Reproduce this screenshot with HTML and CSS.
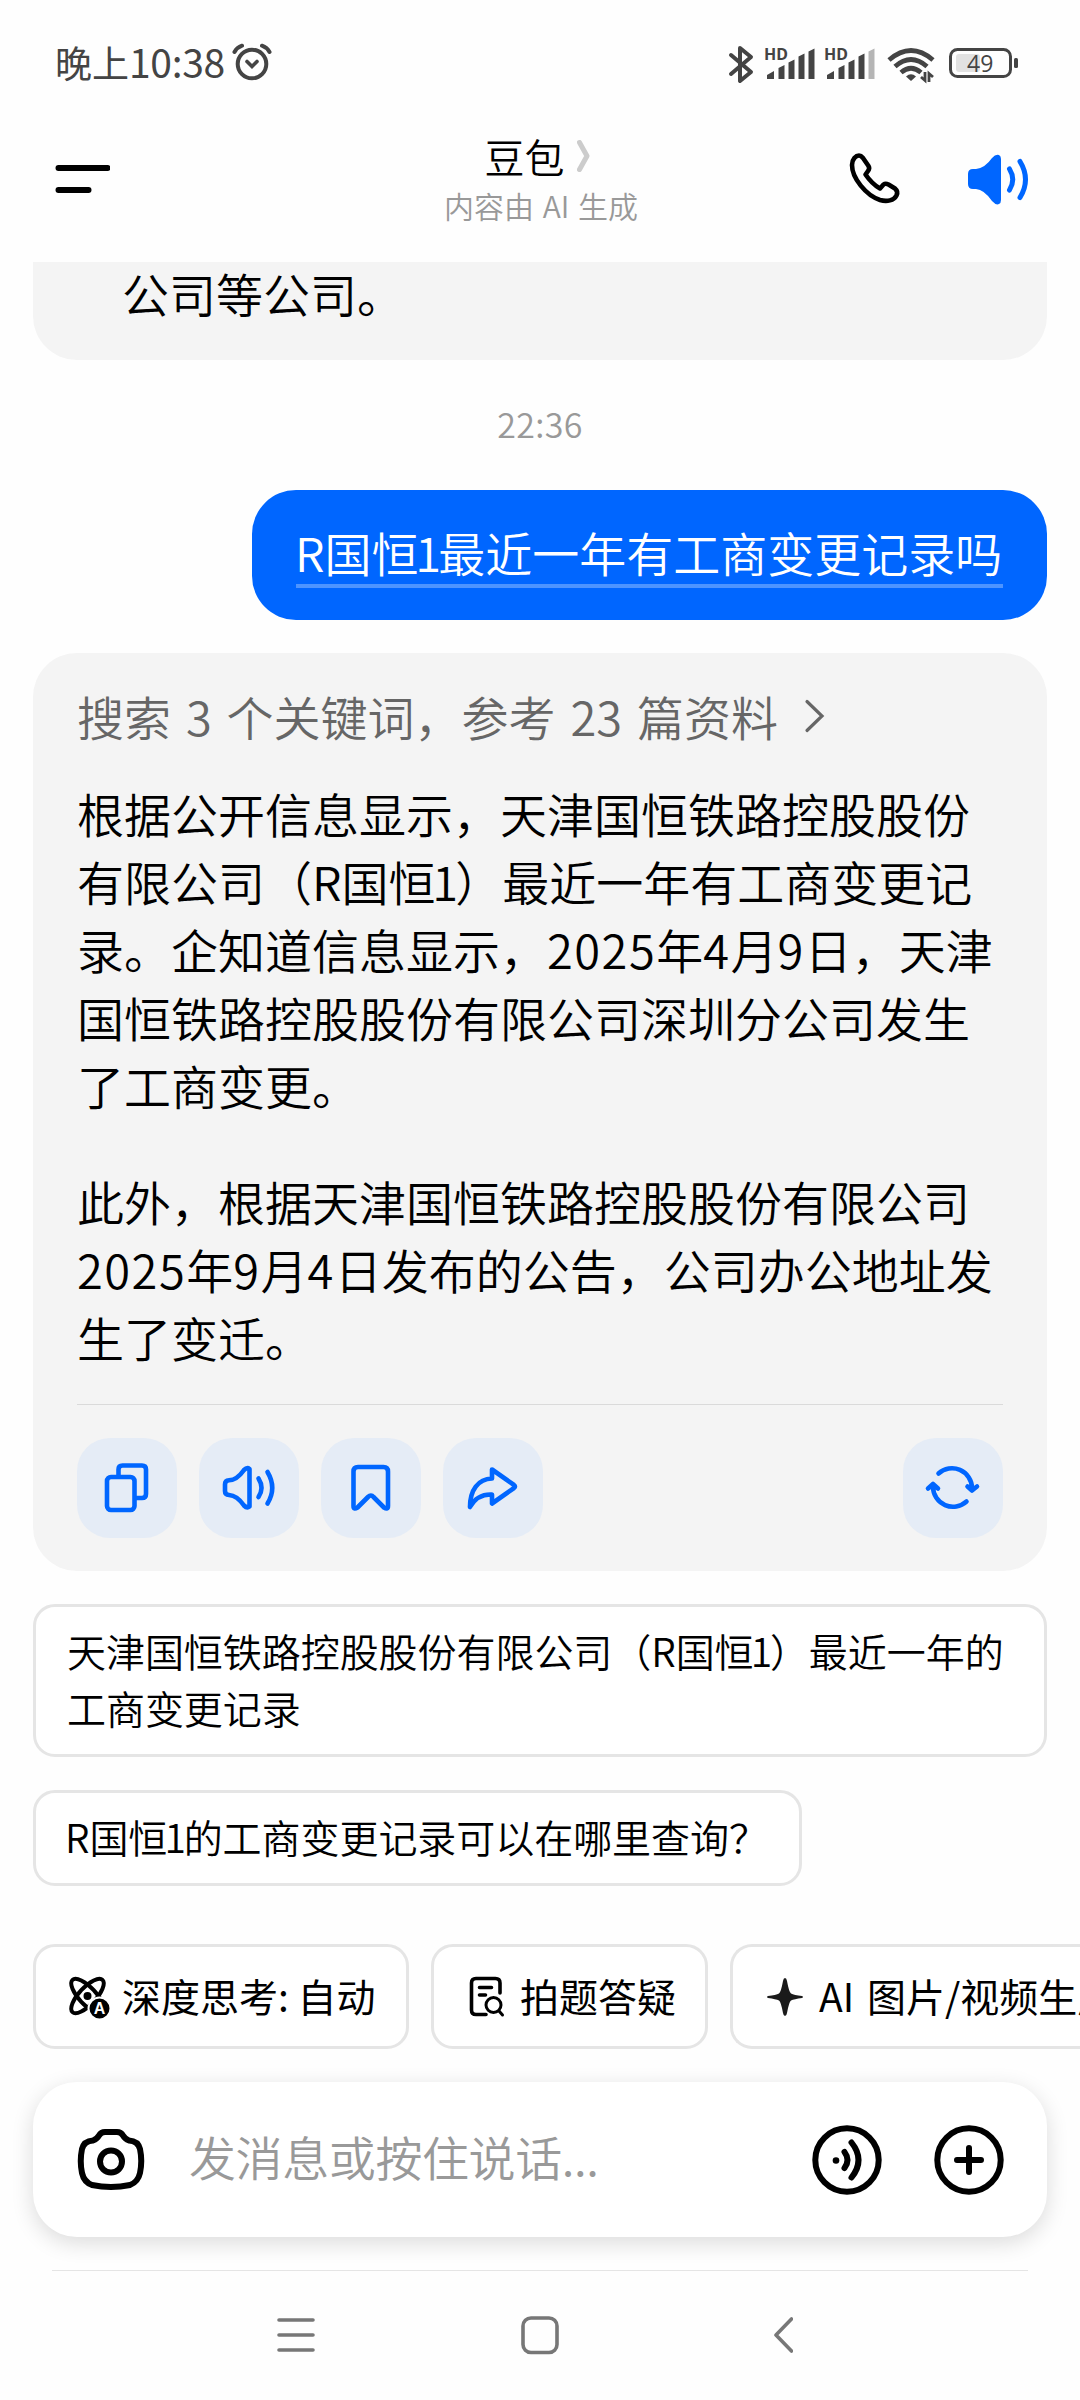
FILE: index.html
```html
<!DOCTYPE html>
<html lang="zh-CN">
  <head>
    <meta charset="UTF-8" />
    <title>豆包</title>
    <link rel="stylesheet" href="styles.css">
  </head>
  <body>
    <!-- Status bar -->
    <div class="status-bar">
      <span class="clock">晚上<span class="clock-num">10:38</span></span>
      <svg class="alarm" width="40" height="38" viewBox="0 0 40 38" fill="none" stroke="#444" stroke-linecap="round">
        <circle cx="20" cy="21" r="14.3" stroke-width="4" />
        <path d="M15 18.500l5 5 5-5" stroke-width="3.600" />
        <path d="M2.500 9Q5 4.500 10 2.700M37.500 9Q35 4.500 30 2.700" stroke-width="4" />
      </svg>
      <svg class="status-icons" width="300" height="50" viewBox="720 40 300 50" fill="#444">
        <path d="M731 55l20 17-11 9V48l11 9-20 17" fill="none" stroke="#444" stroke-width="4" stroke-linejoin="round" stroke-linecap="round" />
        <text x="764" y="59.500" class="hd">HD</text>
        <path d="M767 79v-4l7-4v8zM778.500 79V68l6-3v14zM788.500 79V62.500l6-3V79zM798.500 79V56.500l6-3V79zM808.500 79V51.500l6-3V79z" />
        <text x="824" y="59.500" class="hd">HD</text>
        <path d="M827 79v-4l7-4v8zM838.500 79V68l6-3v14zM848.500 79V62.500l6-3V79zM858.500 79V56.500l6-3V79z" />
        <path d="M868.500 79V51.500l6-3V79z" fill="#b5b5b5" />
        <g fill="none" stroke="#444" stroke-width="4.800">
          <path d="M889 60Q911 41 933 60" />
          <path d="M895 66.500Q911 52.500 927 66.500" />
          <path d="M901 72.500Q911 64 921 72.500" />
        </g>
        <path d="M906 76.500q5-4.500 10 0l-5 4.500z" />
        <path d="M925 72v8.500l-4-3.500M929 82v-8.500l4 3.500" fill="none" stroke="#444" stroke-width="2.800" />
        <rect x="950.500" y="49.500" width="60" height="27" rx="7" fill="none" stroke="#444" stroke-width="3" />
        <rect x="956" y="54" width="24" height="18" rx="3" fill="#e2e2e2" />
        <rect x="1014" y="58" width="4" height="10" rx="1.500" />
        <text x="967" y="71.500" class="battery">49</text>
      </svg>
    </div>

    <!-- Header -->
    <div class="header">
      <svg class="menu" width="56" height="30" viewBox="0 0 56 30" stroke="#000" stroke-width="6" stroke-linecap="round">
        <path d="M4.500 4h49M4.500 26h30" />
      </svg>
      <div class="title-box">
        <div class="title">豆包
          <svg width="13" height="32" viewBox="0 0 13 32" fill="none" stroke="#ccc" stroke-width="5" stroke-linecap="round" stroke-linejoin="round">
            <path d="M2.500 2.500L10 16 2.500 29.500" />
          </svg>
        </div>
        <div class="subtitle">内容由 AI 生成</div>
      </div>
      <svg class="call" width="56" height="56" viewBox="846 150 56 56" fill="none" stroke="#000" stroke-width="4.600" stroke-linejoin="round">
        <path d="M852 165C852 159 856 155.500 859 155.500Q861 155.500 863 158L868.500 166Q870 168.500 868 171L865.500 174.500Q872 184 880 188.500L883.500 184.500Q885.500 183 888.500 184.500L895 188.500Q898.500 191.500 896.500 195.500C894 200.500 887 202 880 200C866 195.500 852 178 852 165Z" />
      </svg>
      <svg class="sound" width="64" height="56" viewBox="966 150 64 56" fill="#06f">
        <path d="M968 174Q968 169 973 169H976Q985 168 992 158Q996 153.500 999 155Q1001 156 1001 159V200Q1001 203 999 204Q996 205.500 992 201Q984 189.500 976 189H973Q968 189 968 184Z" />
        <path d="M1009.500 169Q1016 179.500 1009.500 190M1020 161.500Q1031 179.500 1020 197.500" fill="none" stroke="#06f" stroke-width="5" stroke-linecap="round" />
      </svg>
    </div>

    <!-- Conversation -->
    <div class="chat">
      <div class="prev-answer">公司等公司。</div>
      <div class="time">22:36</div>
      <div class="question"><span>R国恒<i>1</i>最近一年有工商变更记录吗</span></div>

      <div class="answer">
        <div class="search">搜索 3 个关键词，参考 23 篇资料
          <svg width="22" height="36" viewBox="0 0 22 36" fill="none" stroke="#666" stroke-width="3.200" stroke-linecap="round">
            <path d="M3 3.500L18 18 3 32.500" />
          </svg>
        </div>
        <p>根据公开信息显示，天津国恒铁路控股股份<br />有限公司（R国恒<i>1</i>）最近一年有工商变更记<br />录。企知道信息显示，<b>2025</b>年<b>4</b>月<b>9</b>日，天津<br />国恒铁路控股股份有限公司深圳分公司发生<br />了工商变更。</p>
        <p>此外，根据天津国恒铁路控股股份有限公司<br /><b>2025</b>年<b>9</b>月<b>4</b>日发布的公告，公司办公地址发<br />生了变迁。</p>
        <div class="actions">
          <button>
            <svg viewBox="0 0 100 100"><rect x="30" y="39" width="27.500" height="33" rx="4" /><path d="M41.500 38v-6.500q0-4 4-4H65q4 0 4 4V56q0 4-4 4h-6" /></svg>
          </button>
          <button>
            <svg viewBox="0 0 100 100"><path d="M26 46.500q0-4 4-4.200Q38 42 45 32Q48 29 50.500 31V68.500Q48 70.500 45 67.500Q38 57.500 30 57Q26 56.800 26 53Z" /><path d="M59.500 40.500q6 9.500 0 18.500M68.500 34q9.500 16 0 31.500" /></svg>
          </button>
          <button>
            <svg viewBox="0 0 100 100"><path d="M32.500 33.500q0-4.500 4.500-4.500h25.500q4.500 0 4.500 4.500V68q0 4-4 1.500L52.500 59Q50 56 47 59L36.500 69.500q-4 2.500-4-1.500z" /></svg>
          </button>
          <button>
            <svg viewBox="0 0 100 100"><path d="M49 31.500L71 47q2 1.500 0 3L49 65.500V56.500C39 56 32 60 27 69C27 52 35 41 49 40.500Z" /></svg>
          </button>
          <button class="refresh">
            <svg viewBox="0 0 100 100"><path d="M35.500 35.500A20 20 0 0 1 69 50v2M64.500 48.500l4.500 4 5-4M63.500 63.500A20 20 0 0 1 30 49v-2M25 50.500l5-4.500 5 4.500" /></svg>
          </button>
        </div>
      </div>

      <div class="suggest">天津国恒铁路控股股份有限公司（R国恒<i>1</i>）最近一年的<br />工商变更记录</div>
      <div class="suggest short">R国恒<i>1</i>的工商变更记录可以在哪里查询？</div>
    </div>

    <!-- Shortcuts -->
    <div class="chips">
      <div class="chip think">
        <svg width="44" height="44" viewBox="0 0 44 44" fill="none" stroke="#000" stroke-width="4">
          <ellipse cx="20.500" cy="21" rx="22" ry="8.500" transform="rotate(47 20.500 21)" />
          <ellipse cx="20.500" cy="21" rx="22" ry="8.500" transform="rotate(-47 20.500 21)" />
          <circle cx="20.500" cy="21" r="2" />
          <circle cx="32.500" cy="33.500" r="11" fill="#000" stroke="#fff" stroke-width="2" />
          <text x="32.500" y="39" class="auto">A</text>
        </svg>
        <span>深度思考: 自动</span>
      </div>
      <div class="chip photo">
        <svg width="36" height="42" viewBox="0 0 36 42" fill="none" stroke="#000" stroke-width="3.600" stroke-linecap="round">
          <path d="M31 17V7q0-4.500-4.500-4.500H7Q2.500 2.500 2.500 7V34q0 4.500 4.500 4.500h10M10.500 11.500h12M10.500 19h6" />
          <circle cx="24.500" cy="29" r="7.500" stroke-width="3" />
          <path d="M30 35l3.500 4" stroke-width="3" />
        </svg>
        <span>拍题答疑</span>
      </div>
      <div class="chip image">
        <svg width="38" height="38" viewBox="0 0 38 38" fill="#1a1a1a">
          <path d="M19 0q1.500 0 2 3Q23 14 25 15.500Q28 17 36 18q2 1 0 2Q28 21 25 22.500Q23 24 21 35q-.5 3-2 3t-2-3Q15 24 13 22.500Q10 21 2 20q-2-1 0-2Q10 17 13 15.500Q15 14 17 3Q17.500 0 19 0z" />
        </svg>
        <span>AI 图片/视频生成</span>
      </div>
    </div>

    <!-- Input -->
    <div class="input-bar">
      <svg class="camera" width="68" height="64" viewBox="77 2127 68 64" fill="none" stroke="#000" stroke-width="6" stroke-linejoin="round">
        <path d="M105 2131h12q4 0 6 3.500t6 5q9 .5 11 8.500q2.500 12 0 24q-2 9-10 12q-19 4-38 0q-8-3-10-12q-2.500-12 0-24q2-8 11-8.500q4-1.500 6-5t6-3.500z" />
        <circle cx="111" cy="2160.500" r="11" />
      </svg>
      <span class="placeholder">发消息或按住说话...</span>
      <svg class="voice" width="70" height="70" viewBox="0 0 70 70" fill="none" stroke="#000" stroke-width="6" stroke-linecap="round">
        <circle cx="35" cy="35" r="31.700" />
        <circle cx="24" cy="35.500" r="3.300" fill="#000" stroke="none" />
        <path d="M32.500 27q6 8 0 16M39.500 17.500q14 17.500 0 35" />
      </svg>
      <svg class="plus" width="70" height="70" viewBox="0 0 70 70" fill="none" stroke="#000" stroke-width="6" stroke-linecap="round">
        <circle cx="35" cy="35" r="31.700" />
        <path d="M23 35h24M35 23v24" />
      </svg>
    </div>

    <!-- Navigation -->
    <div class="nav">
      <svg width="38" height="40" viewBox="0 0 38 40"><path d="M2 5h34M2 20h34M2 35h34" /></svg>
      <svg width="38" height="40" viewBox="0 0 38 40"><rect x="2" y="3" width="34" height="34.500" rx="8" /></svg>
      <svg width="20" height="40" viewBox="0 0 20 40"><path d="M18.500 4L3 20l15.500 16" /></svg>
    </div>
  </body>
</html>
```

FILE: styles.css
```css
* {
  box-sizing: border-box;
}

body {
  margin: 0;
  width: 1080px;
  height: 2400px;
  overflow: hidden;
  background: #fefefe;
  color: #000;
  font-family: "Noto Sans CJK SC", sans-serif;
  font-weight: 350;
  display: flex;
  flex-direction: column;
}

svg {
  display: block;
  flex: none;
}

p {
  margin: 0;
}

/* digits: narrow 1, wider dates */
i {
  font-style: normal;
  margin-left: -0.07em;
  letter-spacing: -0.06em;
}

b {
  font-weight: inherit;
  letter-spacing: 0.032em;
}

/* status bar */
.status-bar {
  height: 124px;
  padding: 0 60px 0 55px;
  display: flex;
  align-items: center;
}

.clock {
  width: 177px;
  font-size: 37px;
  font-weight: 400;
  line-height: 56px;
  margin-top: -2px;
  color: #444;
  white-space: nowrap;
}

.clock-num {
  font-size: 39px;
  letter-spacing: -0.3px;
}

.status-icons {
  margin: 6px 0 0 auto;
}

.hd {
  font: bold 16px "Noto Sans", sans-serif;
}

.battery {
  font: 23px "Open Sans", sans-serif;
}

/* header */
.header {
  height: 138px;
  padding: 0 50px 0 54px;
  display: flex;
}

.menu {
  margin-top: 40px;
}

.title-box {
  width: 300px;
  margin-left: 281px;
  text-align: center;
}

.title {
  display: flex;
  justify-content: center;
  align-items: center;
  gap: 12px;
  height: 66px;
  margin-top: -1px;
  padding-right: 8px;
  font-size: 40px;
}

.subtitle {
  margin-top: -5px;
  font-size: 30px;
  line-height: 42px;
  word-spacing: 2px;
  color: #999;
}

.call {
  margin: 26px 0 0 155px;
}

.sound {
  margin: 26px 0 0 64px;
}

/* conversation */
.chat {
  height: 1682px;
  padding: 0 33px;
  display: flex;
  flex-direction: column;
}

.prev-answer {
  height: 98px;
  padding-left: 89px;
  background: #f4f4f4;
  border-radius: 0 0 44px 44px;
  font-size: 47px;
  line-height: 62px;
}

.time {
  height: 130px;
  line-height: 127px;
  text-align: center;
  font-size: 34px;
  letter-spacing: 0.3px;
  color: #999;
}

.question {
  align-self: flex-end;
  width: 795px;
  height: 130px;
  padding: 30px 44px;
  background: #06f;
  border-radius: 44px;
  color: #fff;
  font-size: 47px;
  line-height: 64px;
  white-space: nowrap;
}

.question span {
  display: block;
  height: 68px;
  border-bottom: 4px solid #4d94ff;
  text-indent: -1px;
}

.answer {
  height: 918px;
  margin-top: 33px;
  padding: 29px 44px 0;
  background: #f4f4f4;
  border-radius: 44px;
  font-size: 47px;
  line-height: 68px;
  white-space: nowrap;
}

.search {
  display: flex;
  align-items: center;
  gap: 26px;
  margin-bottom: 29px;
  word-spacing: 4.4px;
  color: #666;
}

.answer p + p {
  margin-top: 48px;
}

.actions {
  display: flex;
  gap: 22px;
  margin-top: 33px;
  padding-top: 33px;
  border-top: 1px solid #dadada;
}

.actions button {
  width: 100px;
  height: 100px;
  padding: 0;
  border: none;
  border-radius: 33px;
  background: #e5ecf6;
}

.actions svg {
  fill: none;
  stroke: #06f;
  stroke-width: 4.6;
  stroke-linecap: round;
  stroke-linejoin: round;
}

.actions .refresh {
  margin-left: auto;
}

.suggest {
  height: 153px;
  margin-top: 33px;
  padding: 15px 31px;
  border: 3px solid #e5e5e5;
  border-radius: 22px;
  background: #fff;
  font-size: 39px;
  line-height: 57px;
  letter-spacing: -0.05px;
  white-space: nowrap;
}

.suggest.short {
  width: 769px;
  height: 96px;
  padding-left: 29px;
}

/* shortcuts */
.chips {
  display: flex;
  gap: 22px;
  height: 138px;
  padding-left: 33px;
}

.chip {
  flex: none;
  display: flex;
  align-items: center;
  height: 105px;
  padding-left: 31px;
  border: 3px solid #e5e5e5;
  border-radius: 22px;
  background: #fff;
  font-size: 39px;
  font-weight: 400;
  white-space: nowrap;
}

.chip span {
  margin-top: -3px;
}

.think {
  width: 376px;
}

.think span {
  margin-left: 11px;
}

.photo {
  width: 277px;
  padding-left: 35px;
}

.photo span {
  margin-left: 15px;
}

.image {
  width: 350px;
  padding-left: 33px;
  border-right: none;
  border-radius: 22px 0 0 22px;
}

.image span {
  margin-left: 15px;
  word-spacing: 4px;
}

.auto {
  font: bold 16px "Liberation Sans", sans-serif;
  fill: #fff;
  stroke: none;
  text-anchor: middle;
}

/* input */
.input-bar {
  display: flex;
  align-items: center;
  height: 155px;
  margin: 0 33px;
  padding: 0 43px 0 44px;
  border-radius: 44px;
  background: #fff;
  box-shadow: 0 6px 22px rgba(0, 0, 0, 0.14);
}

.placeholder {
  margin: -8px 0 0 44px;
  font-size: 47px;
  letter-spacing: -0.4px;
  color: #999;
}

.voice {
  margin-left: auto;
}

.plus {
  margin-left: 52px;
}

/* navigation */
.nav {
  display: flex;
  height: 130px;
  margin: 33px 52px 0;
  padding: 44px 0 0 225px;
  border-top: 1px solid #e5e5e5;
}

.nav svg {
  fill: none;
  stroke: #777;
  stroke-width: 3.6;
  stroke-linecap: round;
  stroke-linejoin: round;
}

.nav svg + svg {
  margin-left: 206px;
}

.nav svg:last-child {
  margin-left: 214px;
}
```
